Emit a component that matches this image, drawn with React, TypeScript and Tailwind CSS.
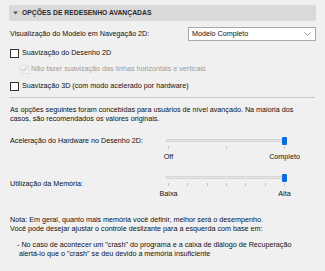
const Checkbox = ({ disabled, checked }: { disabled?: boolean; checked?: boolean }) => (
	<div
		className={
			"w-[9px] h-[9px] flex items-center justify-center shrink-0 " +
			(disabled ? "border border-[#e0e0e0] bg-[#f4f4f4]" : "border border-[#333333] bg-white")
		}
	>
		{checked && (
			<svg width="7" height="6" viewBox="0 0 7 6">
				<polyline points="0.8,3 2.7,5 6.2,0.8" fill="none" stroke={disabled ? "#b0b0b0" : "#222"} strokeWidth="1" />
			</svg>
		)}
	</div>
);

const Slider = ({ ticks, left, right }: { ticks: number; left: string; right: string }) => (
	<div className="w-[121px] flex flex-col">
		<div className="relative h-[8px]">
			<div className="absolute left-0 right-[2px] top-[2px] h-[3px] bg-[#e6e6e6] border border-[#d4d4d4]" />
			<div className="absolute right-0 top-0 w-[5px] h-[8px] bg-[#0a6dd8] rounded-[1px]" />
		</div>
		<div className="mt-[1px] h-[3px] flex justify-between pl-[2px] pr-[2px]">
			{Array.from({ length: ticks }).map((_, i) => (
				<div key={i} className="w-px h-[3px] bg-[#c4c4c4]" />
			))}
		</div>
		<div className="mt-[3px] h-[9px] leading-[9px] flex justify-between pl-[2px] pr-[2px]">
			<div className="w-px flex justify-center whitespace-nowrap">{left}</div>
			<div className="w-px flex justify-center whitespace-nowrap">{right}</div>
		</div>
	</div>
);

const App = () => {
	return (
		<div className="w-[325px] h-[271px] bg-[#f0f0f0] overflow-hidden px-[9px] pt-[5px] font-['Liberation_Sans',sans-serif] text-[7.2px] text-[#111] whitespace-nowrap">
			<div className="h-[16px] w-[307px] bg-[#d9d9d9] rounded-[2px] flex items-center pl-[4px]">
				<svg width="5" height="4" viewBox="0 0 5 4" className="mr-[4px]">
					<polygon points="0,0.5 5,0.5 2.5,3.5" fill="#555" />
				</svg>
				<span className="font-bold text-[6.8px] text-[#2a2a2a]">OPÇÕES DE REDESENHO AVANÇADAS</span>
			</div>

			<div className="mt-[6px] h-[14px] w-[307px] flex items-center justify-between">
				<span className="pl-[1px]">Visualização do Modelo em Navegação 2D:</span>
				<div className="w-[128px] h-[14px] bg-white border border-[#a9a9a9] flex items-center justify-between pl-[3px] pr-[4px]">
					<span>Modelo Completo</span>
					<svg width="7" height="4" viewBox="0 0 7 4">
						<polyline points="0.5,0.5 3.5,3.5 6.5,0.5" fill="none" stroke="#9a9a9a" strokeWidth="1" />
					</svg>
				</div>
			</div>

			<div className="mt-[7px] h-[10px] flex items-center pl-[1px] gap-[3px]">
				<Checkbox />
				<span>Suavização do Desenho 2D</span>
			</div>
			<div className="mt-[6px] h-[10px] flex items-center pl-[11px] gap-[1px] text-[#9b9b9b]">
				<Checkbox disabled checked />
				<span className="ml-[1px]">Não fazer suavização das linhas horizontais e verticais</span>
			</div>
			<div className="mt-[7px] h-[10px] flex items-center pl-[1px] gap-[3px]">
				<Checkbox />
				<span>Suavização 3D (com modo acelerado por hardware)</span>
			</div>

			<div className="mt-[6px] h-px w-[306px] bg-[#c8c8c8]" />

			<p className="mt-[7px] pl-[1px] leading-[9px]">
				As opções seguintes foram concebidas para usuários de nível avançado. Na maioria dos
				<br />
				casos, são recomendados os valores originais.
			</p>

			<div className="mt-[14px] flex">
				<div className="w-[157px] pl-[1px] leading-[8px]">Aceleração do Hardware no Desenho 2D:</div>
				<Slider ticks={3} left="Off" right="Completo" />
			</div>

			<div className="mt-[13px] flex">
				<div className="w-[157px] pl-[1px] leading-[8px] pt-[6px]">Utilização da Memória:</div>
				<Slider ticks={7} left="Baixa" right="Alta" />
			</div>

			<p className="mt-[17px] pl-[1px] leading-[9px]">
				Nota: Em geral, quanto mais memória você definir, melhor será o desempenho.
				<br />
				Você pode desejar ajustar o controle deslizante para a esquerda com base em:
			</p>
			<p className="mt-[7px] pl-[8px] leading-[9px]">
				- No caso de acontecer um "crash" do programa e a caixa de diálogo de Recuperação
				<br />
				<span className="pl-[2px]">alertá-lo que o "crash" se deu devido a memória insuficiente</span>
			</p>
		</div>
	);
};

export default App;
